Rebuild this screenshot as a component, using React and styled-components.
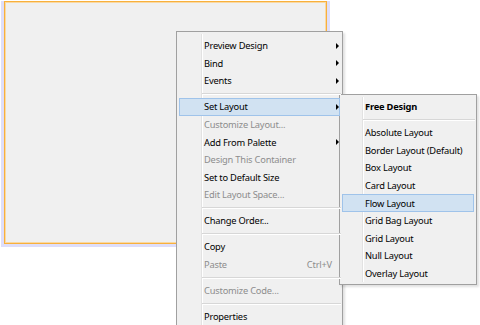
import React from "react";
import styled, { createGlobalStyle } from "styled-components";

const GlobalStyle = createGlobalStyle`
  html, body {
    margin: 0;
    padding: 0;
    background: #ffffff;
    width: 480px;
    height: 325px;
    overflow: hidden;
  }
  body {
    font-family: "Noto Sans", "Open Sans", sans-serif;
  }
`;

const mainItems = [
  { label: "Preview Design", arrow: true },
  { label: "Bind", arrow: true },
  { label: "Events", arrow: true },
  { sep: true },
  { label: "Set Layout", arrow: true, active: true },
  { label: "Customize Layout...", disabled: true },
  { label: "Add From Palette", arrow: true },
  { label: "Design This Container", disabled: true },
  { label: "Set to Default Size" },
  { label: "Edit Layout Space...", disabled: true },
  { sep: true },
  { label: "Change Order..." },
  { sep: true },
  { label: "Copy" },
  { label: "Paste", disabled: true, shortcut: "Ctrl+V" },
  { sep: true },
  { label: "Customize Code...", disabled: true },
  { sep: true },
  { label: "Properties" },
];

const layoutItems = [
  { label: "Free Design", bold: true },
  { sep: true },
  { label: "Absolute Layout" },
  { label: "Border Layout (Default)" },
  { label: "Box Layout" },
  { label: "Card Layout" },
  { label: "Flow Layout", active: true },
  { label: "Grid Bag Layout" },
  { label: "Grid Layout" },
  { label: "Null Layout" },
  { label: "Overlay Layout" },
];

const MenuList = ({ items, indent }) =>
  items.map((it, i) =>
    it.sep ? (
      <Separator key={i} $indent={indent} />
    ) : (
      <Item key={i} $indent={indent} $active={it.active} $disabled={it.disabled}>
        <Label $bold={it.bold}>{it.label}</Label>
        {it.shortcut && <Shortcut>{it.shortcut}</Shortcut>}
        {it.arrow && <Arrow />}
      </Item>
    )
  );

const App = () => (
  <>
    <GlobalStyle />
    <Stage>
      <Glow>
        <Canvas />
      </Glow>
      <MainMenu>
        <MenuList items={mainItems} indent={24} />
      </MainMenu>
      <SubMenu>
        <MenuList items={layoutItems} indent={22} />
      </SubMenu>
    </Stage>
  </>
);

export default App;

const Stage = styled.div`
  position: relative;
  width: 480px;
  height: 325px;
`;

const Glow = styled.div`
  margin-left: 1px;
  width: 323px;
  padding: 1px 3px 3px 3px;
  background: linear-gradient(#ffffff 0 1px, #dedefa 1px);
`;

const Canvas = styled.div`
  height: 241px;
  border: 1px solid #f8b03c;
  background: #f0f0f0;
  box-shadow: inset 0 0 0 1px #f9d9a3;
`;

const Menu = styled.div`
  position: absolute;
  box-sizing: border-box;
  background: #f0f0f0;
  border: 1px solid #a0a0a0;
  box-shadow: 2px 2px 2px rgba(0, 0, 0, 0.12);
  font-size: 9.3px;
  letter-spacing: -0.2px;
  &::before {
    content: "";
    position: absolute;
    top: 2px;
    bottom: 2px;
    left: ${(p) => p.$gutter}px;
    width: 1px;
    background: #e2e2e2;
    box-shadow: 1px 0 0 #ffffff;
  }
`;

const MainMenu = styled(Menu).attrs({ $gutter: 24 })`
  left: 176px;
  top: 31px;
  width: 167px;
  height: 310px;
  padding-top: 5px;
`;

const SubMenu = styled(Menu).attrs({ $gutter: 22 })`
  left: 339px;
  top: 94px;
  width: 138px;
  height: 191px;
  padding-top: 3px;
`;

const Item = styled.div`
  position: relative;
  z-index: 1;
  display: flex;
  align-items: center;
  box-sizing: border-box;
  height: 17.6px;
  margin: 0 2px;
  padding-left: ${(p) => p.$indent}px;
  padding-right: 8px;
  color: ${(p) => (p.$disabled ? "#8d8d8d" : "#000000")};
  background: ${(p) => (p.$active ? "#d1e2f2" : "transparent")};
  border: 1px solid ${(p) => (p.$active ? "#9fc3ea" : "transparent")};
`;

const Label = styled.span`
  flex: 1;
  white-space: nowrap;
  font-weight: ${(p) => (p.$bold ? 700 : 400)};
`;

const Shortcut = styled.span`
  margin-right: -1px;
`;

const Arrow = styled.span`
  width: 0;
  height: 0;
  border-top: 3px solid transparent;
  border-bottom: 3px solid transparent;
  border-left: 3px solid #000000;
  margin-right: -8px;
`;

const Separator = styled.div`
  position: relative;
  z-index: 1;
  height: 8.4px;
  margin-left: ${(p) => p.$indent + 1}px;
  &::after {
    content: "";
    position: absolute;
    left: 0;
    right: 1px;
    top: 3.5px;
    height: 1px;
    background: #d7d7d7;
    box-shadow: 0 1px 0 #ffffff;
  }
`;
